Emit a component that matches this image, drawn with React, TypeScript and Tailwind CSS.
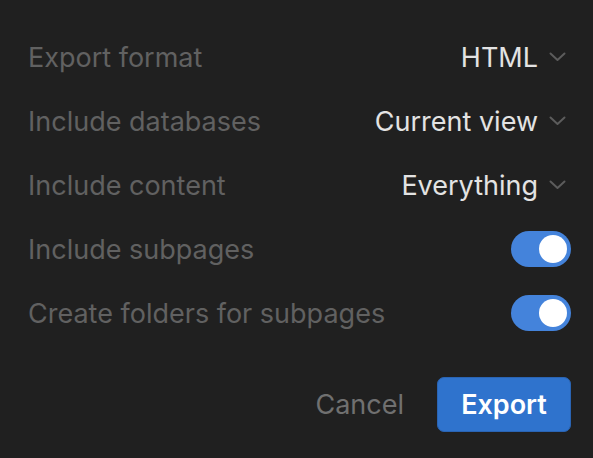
import { useState } from "react";

type SelectRowProps = {
  label: string;
  value: string;
};

function Chevron() {
  return (
    <svg width="17" height="10" viewBox="0 0 17 10" fill="none" className="ml-[11px] mr-[5px]">
      <path d="M1.5 1.5l7 6.5 7-6.5" stroke="#5c5c5c" strokeWidth="2" strokeLinecap="round" strokeLinejoin="round" />
    </svg>
  );
}

function SelectRow(props: SelectRowProps) {
  return (
    <div className="flex h-16 items-center justify-between">
      <span className="text-[#616161]">{props.label}</span>
      <button className="flex items-center text-[#e3e3e3]">
        {props.value}
        <Chevron />
      </button>
    </div>
  );
}

function ToggleRow(props: { label: string }) {
  const [on, setOn] = useState(true);
  return (
    <div className="flex h-16 items-center justify-between">
      <span className="text-[#616161]">{props.label}</span>
      <button
        onClick={() => setOn(!on)}
        className={`flex h-9 w-[60px] items-center rounded-full px-1 ${on ? "justify-end bg-[#4483db]" : "justify-start bg-[#3a3a3a]"}`}
      >
        <span className="h-7 w-7 rounded-full bg-white" />
      </button>
    </div>
  );
}

export default function App() {
  return (
    <div
      className="h-[458px] w-[593px] bg-[#202020] pl-[28px] pr-[22px] pt-[25px] text-[27px] leading-none"
      style={{ fontFamily: "Inter, 'Noto Sans', sans-serif" }}
    >
      <SelectRow label="Export format" value="HTML" />
      <SelectRow label="Include databases" value="Current view" />
      <SelectRow label="Include content" value="Everything" />
      <ToggleRow label="Include subpages" />
      <ToggleRow label="Create folders for subpages" />
      <div className="mt-8 flex items-center justify-end gap-[33px]">
        <button className="text-[#707070]">Cancel</button>
        <button className="h-[55px] w-[134px] rounded-[7px] border border-[#2a64b3] bg-[#2f73cd] font-semibold text-white">
          Export
        </button>
      </div>
    </div>
  );
}
